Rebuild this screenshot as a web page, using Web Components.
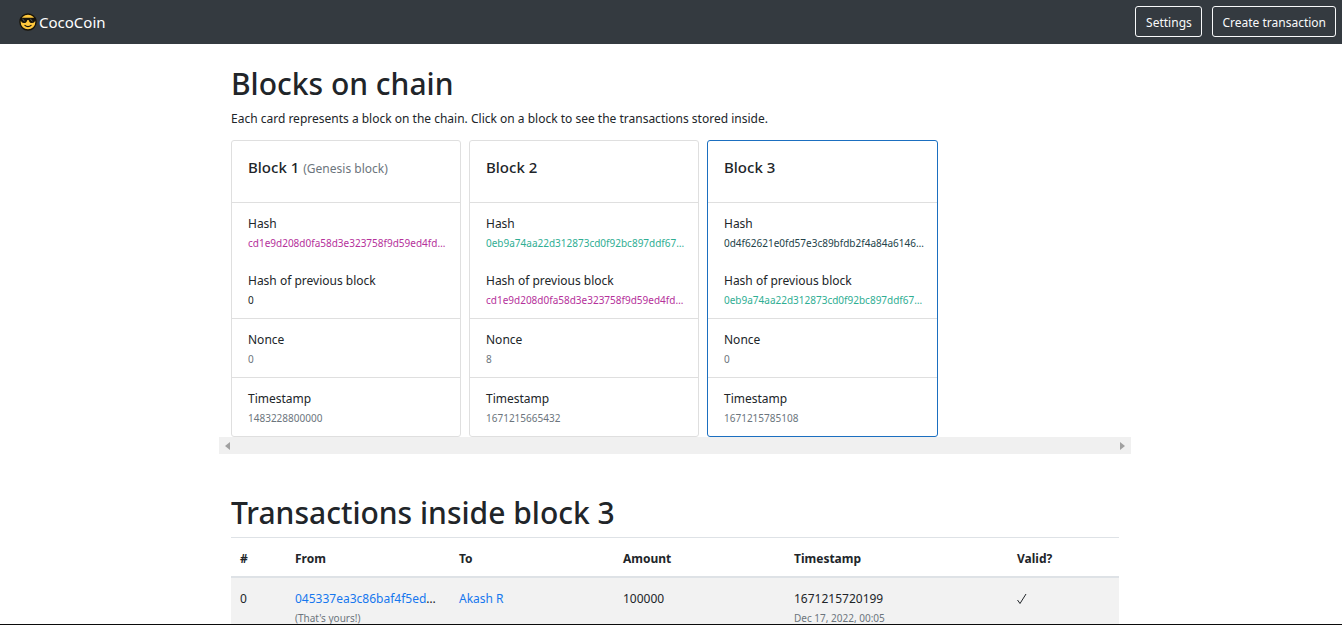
<!DOCTYPE html>
<html lang="en">
<head>
<meta charset="utf-8">
<meta name="viewport" content="width=device-width, initial-scale=1">
<title>CocoCoin</title>
<style>
  body {
    margin: 0;
    background: #fff;
    color: #212529;
    font: 12px/20px "Noto Sans", "Open Sans", sans-serif;
  }
</style>
</head>
<body>
<coco-app></coco-app>

<template id="app-template">
  <style>
    :host { display: flex; flex-direction: column; height: 100vh; box-sizing: border-box; overflow: hidden; border-bottom: 1px solid #0b0b0b; }
    coco-navbar { flex: none; }
    main { flex: none; padding-left: 8px; }
    .container { max-width: 912px; margin: 0 auto; }
    section { padding: 21px 12px 0; }
    section + coco-scroller + section { padding-top: 40px; }
    h1 { margin: 0 0 5px; font-size: 30px; line-height: 38px; font-weight: 500; }
    p { margin: 0 0 10px; line-height: 22px; }
    .cards { display: flex; gap: 8px; }
  </style>
  <coco-navbar>
    <coco-button>Settings</coco-button>
    <coco-button>Create transaction</coco-button>
  </coco-navbar>
  <main>
    <div class="container">
      <section>
        <h1>Blocks on chain</h1>
        <p>Each card represents a block on the chain. Click on a block to see the transactions stored inside.</p>
        <div class="cards">
          <block-card style="--hash:#b5319b">
            Block 1<small slot="note">(Genesis block)</small>
            <span slot="hash">cd1e9d208d0fa58d3e323758f9d59ed4fd…</span>
            <span slot="previous">0</span>
            <span slot="nonce">0</span>
            <span slot="timestamp">1483228800000</span>
          </block-card>
          <block-card style="--hash:#2fae93;--previous:#b5319b">
            Block 2
            <span slot="hash">0eb9a74aa22d312873cd0f92bc897ddf67…</span>
            <span slot="previous">cd1e9d208d0fa58d3e323758f9d59ed4fd…</span>
            <span slot="nonce">8</span>
            <span slot="timestamp">1671215665432</span>
          </block-card>
          <block-card selected style="--hash:#24434a;--previous:#2fae93">
            Block 3
            <span slot="hash">0d4f62621e0fd57e3c89bfdb2f4a84a6146…</span>
            <span slot="previous">0eb9a74aa22d312873cd0f92bc897ddf67…</span>
            <span slot="nonce">0</span>
            <span slot="timestamp">1671215785108</span>
          </block-card>
        </div>
      </section>
      <coco-scroller></coco-scroller>
      <section>
        <h1>Transactions inside block 3</h1>
        <transaction-table></transaction-table>
      </section>
    </div>
  </main>
</template>

<template id="navbar-template">
  <style>
    :host { display: flex; align-items: center; justify-content: space-between; box-sizing: border-box; height: 44px; padding: 0 6px 1px 19px; background: #343a40; }
    a { display: flex; align-items: center; gap: 2px; color: #fff; font-size: 15px; text-decoration: none; }
    svg { width: 18px; height: 18px; }
    nav { display: flex; gap: 10px; }
  </style>
  <a href="#">
    <svg viewBox="0 0 17 17" aria-hidden="true">
      <circle cx="8.5" cy="8.5" r="7.6" fill="#ffc83d" stroke="#17130a" stroke-width="1.3"/>
      <path d="M1 4.600h15v1.200l-.8.5c0 2.200-1 3.100-2.900 3.100-1.800 0-2.800-.9-3.200-2.900H7.900C7.500 8.500 6.500 9.400 4.700 9.400 2.800 9.400 1.800 8.500 1.800 6.300L1 5.800Z" fill="#17130a"/>
      <path d="M3.300 5.800 5.300 7.600M10.700 5.800l2 1.800" stroke="#8a8a84" stroke-width=".7"/>
      <path d="M5.600 11.700c1.600 1.600 4.200 1.600 5.800 0" fill="none" stroke="#17130a" stroke-width="1.100" stroke-linecap="round"/>
    </svg>
    <span>CocoCoin</span>
  </a>
  <nav><slot></slot></nav>
</template>

<template id="button-template">
  <style>
    :host { display: block; }
    button { display: block; min-width: 67px; height: 31px; padding: 2px 9px 0; border: 1px solid #f8f9fa; border-radius: 3px; background: none; color: #f8f9fa; font: inherit; cursor: pointer; }
  </style>
  <button type="button"><slot></slot></button>
</template>

<template id="card-template">
  <style>
    :host { display: block; flex: none; box-sizing: border-box; width: 230px; border: 1px solid #dfdfdf; border-radius: 3px; background: #fff; cursor: pointer; }
    :host([selected]) { width: 231px; border-color: #1b6fc0; }
    header { display: flex; align-items: baseline; gap: 4px; height: 45px; padding: 16px 16px 0; }
    h2 { margin: 0; font-size: 15px; line-height: 20px; font-weight: 500; }
    ::slotted(small) { color: #6c757d; font-size: 12px; }
    dl { margin: 0; padding: 11px 16px 8px; border-top: 1px solid #dfdfdf; }
    dd { margin: 0; font-size: 10px; line-height: 19px; color: #6c757d; white-space: nowrap; }
    dd + dt { margin-top: 18px; }
    .hash { color: var(--hash); }
    .previous { color: var(--previous, #212529); }
  </style>
  <header><h2><slot></slot></h2><slot name="note"></slot></header>
  <dl>
    <dt>Hash</dt><dd class="hash"><slot name="hash"></slot></dd>
    <dt>Hash of previous block</dt><dd class="previous"><slot name="previous"></slot></dd>
  </dl>
  <dl><dt>Nonce</dt><dd><slot name="nonce"></slot></dd></dl>
  <dl><dt>Timestamp</dt><dd><slot name="timestamp"></slot></dd></dl>
</template>

<template id="scroller-template">
  <style>
    :host { display: flex; justify-content: space-between; height: 17px; background: #f0f0f0; }
    button { display: grid; place-items: center; width: 17px; padding: 0; border: 0; background: none; }
    svg { width: 5px; height: 8px; fill: #a0a0a0; }
  </style>
  <button type="button" aria-label="Scroll left"><svg viewBox="0 0 5 8"><path d="M5 0v8L0 4Z"/></svg></button>
  <button type="button" aria-label="Scroll right"><svg viewBox="0 0 5 8"><path d="M0 0v8l5-4Z"/></svg></button>
</template>

<template id="table-template">
  <style>
    :host { display: block; }
    table { width: 100%; table-layout: fixed; border-spacing: 0; border-top: 1px solid #dee2e6; }
    .index { width: 54px; }
    .party { width: 164px; }
    .amount { width: 171px; }
    .time { width: 223px; }
    th { padding: 11px 10px 7px; border-bottom: 2px solid #dee2e6; text-align: left; font-weight: 700; }
    td { padding: 11px 10px; background: #f2f2f2; vertical-align: top; white-space: nowrap; }
    th:first-child, td:first-child { padding-left: 9px; }
    a { color: #1677ee; text-decoration: none; }
    small { display: block; color: #6c757d; font-size: 10px; line-height: 19px; }
    svg { display: block; width: 10px; height: 20px; fill: none; stroke: #212529; }
  </style>
  <table>
    <colgroup><col class="index"><col class="party"><col class="party"><col class="amount"><col class="time"><col></colgroup>
    <thead><tr><th>#</th><th>From</th><th>To</th><th>Amount</th><th>Timestamp</th><th>Valid?</th></tr></thead>
    <tbody>
      <tr>
        <td>0</td>
        <td><a href="#">045337ea3c86baf4f5ed</a>…<small>(That's yours!)</small></td>
        <td><a href="#">Akash R</a></td>
        <td>100000</td>
        <td>1671215720199<small>Dec 17, 2022, 00:05</small></td>
        <td><svg viewBox="0 0 10 20" role="img" aria-label="Valid"><path d="M.5 11 3 14.500 9 5"/></svg></td>
      </tr>
    </tbody>
  </table>
</template>

<script>
  class TemplateElement extends HTMLElement {
    constructor() {
      super();
      const template = document.getElementById(this.constructor.templateId);
      this.attachShadow({ mode: "open" }).append(template.content.cloneNode(true));
    }
  }
  customElements.define("coco-button", class extends TemplateElement { static templateId = "button-template"; });
  customElements.define("coco-navbar", class extends TemplateElement { static templateId = "navbar-template"; });
  customElements.define("block-card", class extends TemplateElement { static templateId = "card-template"; });
  customElements.define("coco-scroller", class extends TemplateElement { static templateId = "scroller-template"; });
  customElements.define("transaction-table", class extends TemplateElement { static templateId = "table-template"; });
  customElements.define("coco-app", class extends TemplateElement { static templateId = "app-template"; });
</script>
</body>
</html>
